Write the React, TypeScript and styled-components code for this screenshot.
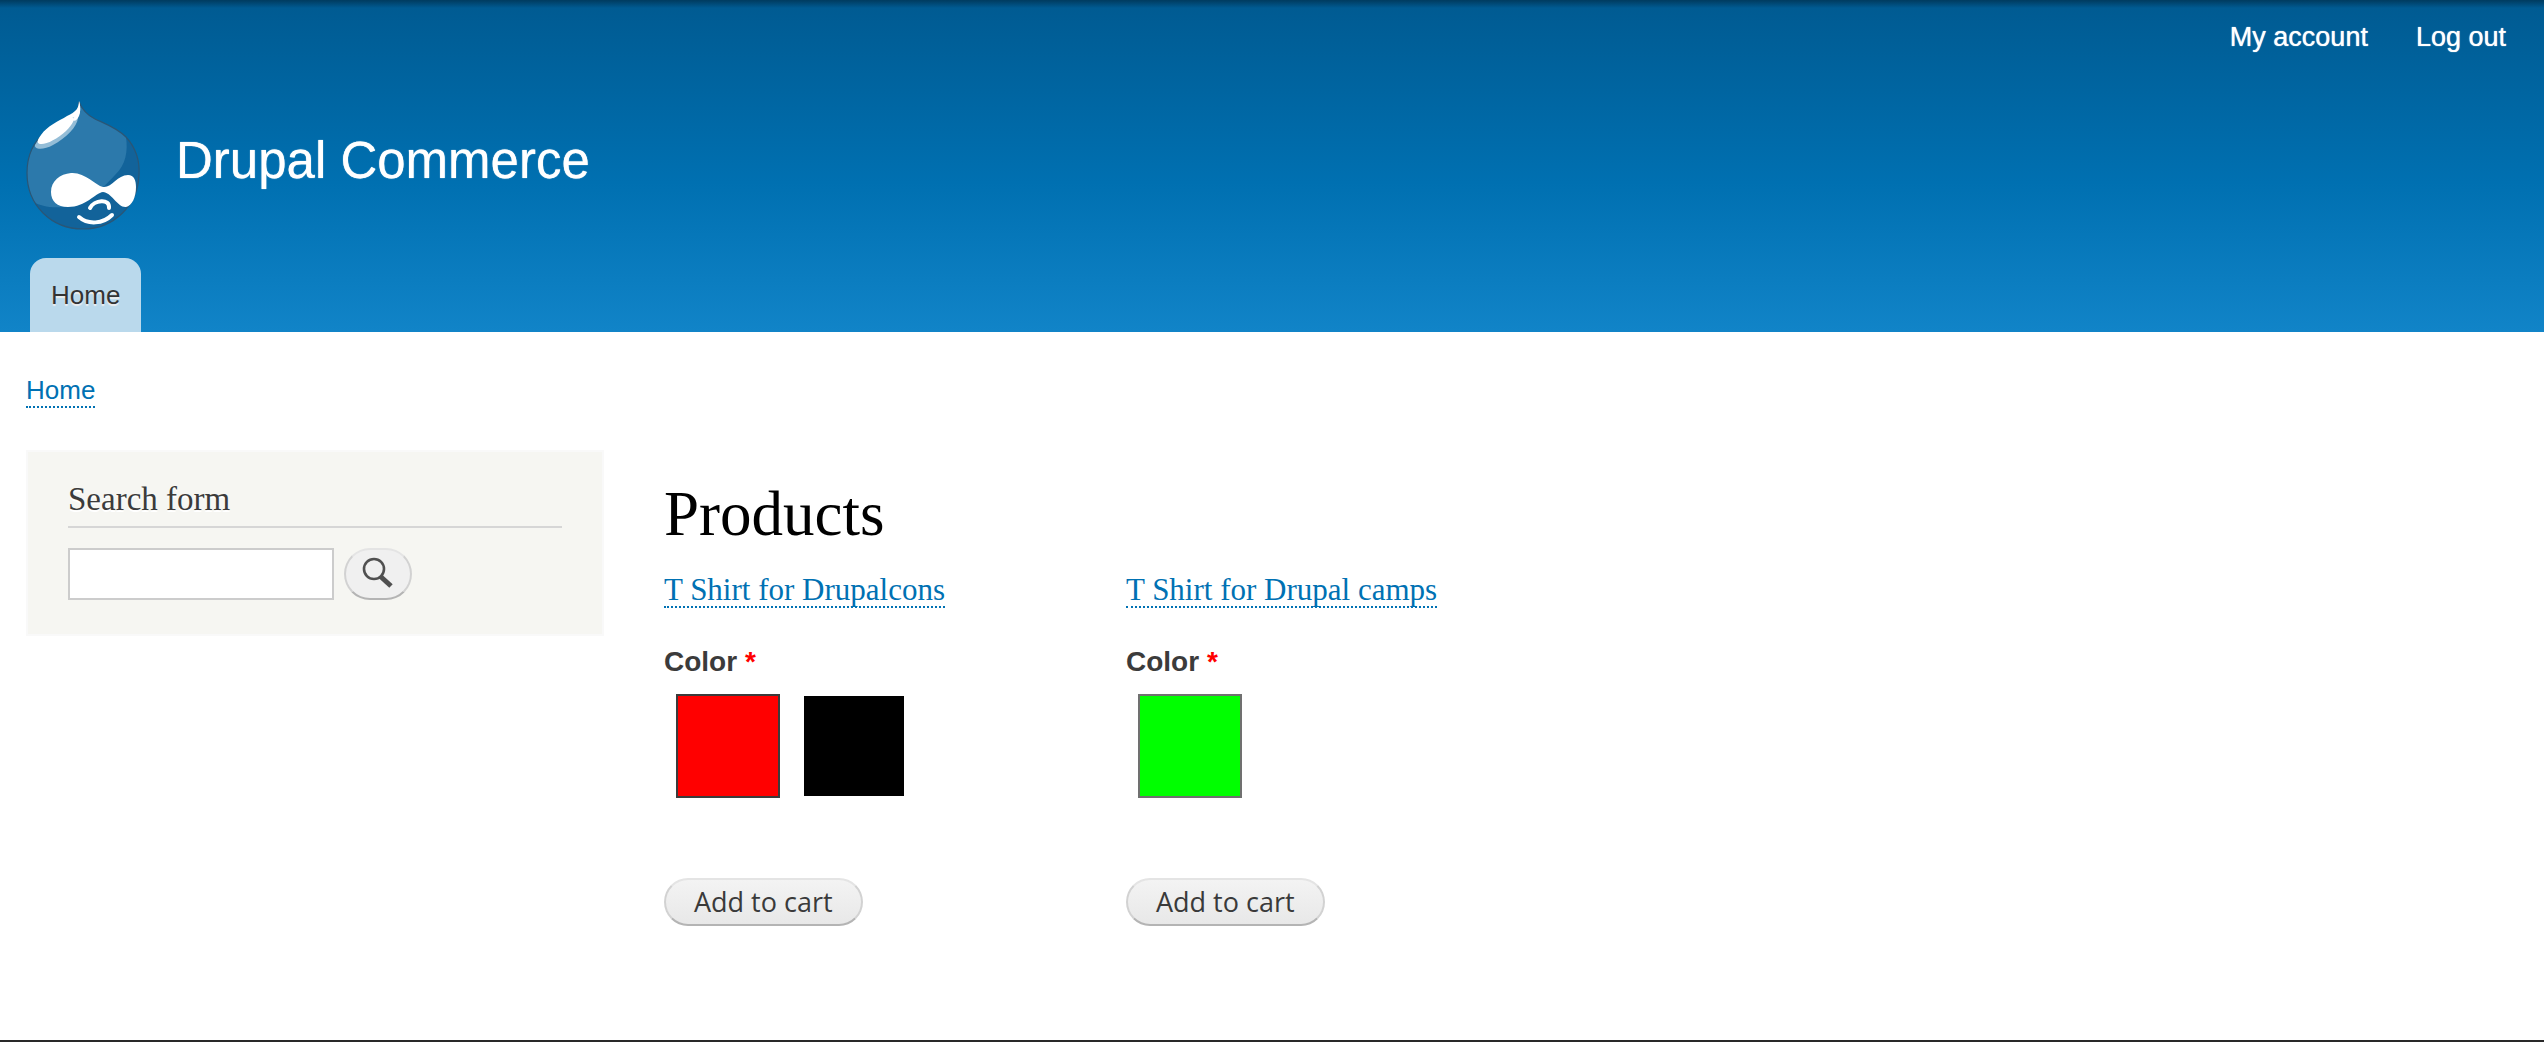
import React, { useState } from "react";
import styled, { createGlobalStyle } from "styled-components";

const sans = `"Liberation Sans", Arial, sans-serif`;
const serif = `Georgia, "Liberation Serif", serif`;
const humanist = `"Lucida Grande", "Open Sans", "Noto Sans", sans-serif`;

const GlobalStyle = createGlobalStyle`
  *, *::before, *::after { box-sizing: border-box; }
  body {
    margin: 0;
    background: #fff;
    color: #3b3b3b;
    font-family: ${serif};
  }
`;

const Page = styled.div`
  display: flex;
  flex-direction: column;
  min-height: 100vh;
`;

const Header = styled.header`
  display: flex;
  flex-direction: column;
  background:
    linear-gradient(to bottom, rgba(0, 0, 0, 0.35), rgba(0, 0, 0, 0)) top / 100% 8px no-repeat,
    linear-gradient(to bottom, #005a91 0%, #0070b1 55%, #1184c8 100%);
  font-family: ${sans};
`;

const AccountNav = styled.nav`
  display: flex;
  justify-content: flex-end;
  gap: 48px;
  padding: 20px 38px 0 26px;
`;

const AccountLink = styled.a`
  color: #fff;
  font-size: 27px;
  line-height: 34px;
  text-decoration: none;
  text-shadow: 0 0 1px #fff;
`;

const Branding = styled.div`
  display: flex;
  align-items: center;
  gap: 34px;
  padding: 46px 26px 0;
`;

const LogoLink = styled.a`
  display: block;
  svg { display: block; }
`;

const SiteName = styled.a`
  color: #fff;
  font-size: 51px;
  line-height: 60px;
  padding-bottom: 10px;
  text-decoration: none;
  text-shadow: 0 0 1px #fff;
`;

const MainMenu = styled.nav`
  display: flex;
  padding: 26px 30px 0;
`;

const Tab = styled.a`
  padding: 20px 21px;
  border-radius: 16px 16px 0 0;
  background: #bad9ec;
  color: #333;
  font-size: 26px;
  line-height: 34px;
  text-decoration: none;
  text-shadow: 0 2px 1px #eee;
`;

const Body = styled.div`
  flex: 1;
  padding: 42px 26px 48px;
`;

const DottedLink = styled.a`
  display: inline-block;
  color: #0071b3;
  border-bottom: 2px dotted #0071b3;
  text-decoration: none;
`;

const Breadcrumb = styled.nav`
  display: flex;
  margin-bottom: 42px;
  font-family: ${sans};
  font-size: 26px;
  line-height: 32px;
`;

const Columns = styled.div`
  display: grid;
  grid-template-columns: minmax(400px, 578px) minmax(0, 1fr);
  column-gap: 60px;
  align-items: start;
`;

const Sidebar = styled.aside`
  padding: 28px 40px 34px;
  background: #f6f6f2;
  border: 2px solid #f9f9f9;
`;

const BlockTitle = styled.h2`
  margin: 0 0 20px;
  padding-bottom: 8px;
  border-bottom: 2px solid #d6d6d6;
  font-size: 33px;
  font-weight: 400;
  line-height: 38px;
  text-shadow: 0 2px 0 #fff;
`;

const SearchForm = styled.form`
  display: flex;
  gap: 10px;
`;

const SearchInput = styled.input`
  width: 266px;
  height: 52px;
  padding: 4px 8px;
  border: 2px solid #ccc;
  border-radius: 0;
  background: #fff;
  color: #3b3b3b;
  font: 26px ${humanist};
`;

const pill = `
  border: 2px solid;
  border-color: #e4e4e4 #d2d2d2 #b4b4b4;
  cursor: pointer;
`;

const SearchButton = styled.button`
  ${pill}
  display: flex;
  align-items: center;
  justify-content: center;
  width: 68px;
  height: 52px;
  padding: 0;
  border-radius: 26px;
  background: #f0f0f0;
`;

const Content = styled.main`
  padding-top: 30px;
`;

const PageTitle = styled.h1`
  margin: 0 0 26px;
  color: #000;
  font-size: 63px;
  font-weight: 400;
  line-height: 68px;
`;

const ProductGrid = styled.div`
  display: grid;
  grid-template-columns: repeat(auto-fill, 402px);
  gap: 60px;
`;

const Product = styled.article`
  display: flex;
  flex-direction: column;
  align-items: flex-start;
`;

const ProductTitle = styled.h3`
  margin: 0;
  font-size: 31px;
  font-weight: 400;
  line-height: 32px;
  white-space: nowrap;
`;

const ColorField = styled.fieldset`
  margin: 34px 0 80px;
  padding: 0;
  border: 0;
`;

const FieldLabel = styled.legend`
  padding: 0;
  margin-bottom: 12px;
  font-family: ${sans};
  font-size: 28px;
  font-weight: 700;
  line-height: 40px;
`;

const Required = styled.span`
  color: #f00;
`;

const Swatches = styled.div`
  display: flex;
  gap: 22px;
  padding-left: 12px;
`;

const Swatch = styled.input<{ $fill: string; $edge: string }>`
  appearance: none;
  width: 104px;
  height: 104px;
  margin: 0;
  border: 2px solid #fff;
  background: ${(p) => p.$fill};
  background-clip: padding-box;
  cursor: pointer;
  &:checked { border-color: ${(p) => p.$edge}; }
`;

const CartButton = styled.button`
  ${pill}
  height: 48px;
  padding: 0 28px;
  border-radius: 24px;
  background: linear-gradient(#f3f3f3, #e8e8e8);
  color: #3a3a3a;
  font: 27px/40px ${humanist};
`;

const Footer = styled.footer`
  height: 2px;
  background: #292929;
`;

const Druplicon = () => (
  <svg width="116" height="132" viewBox="0 0 116 132" role="img" aria-label="Home">
    <path
      d="M53 2C56 9 61 15 69 19C80 24 91 28 100 37C110 48 114 60 113 75C112 105 88 129 57 129C25 129 1 105 1 73C1 55 8 41 20 32C29 25 40 21 47 16C51 13 53 8 53 2Z"
      fill="#12639a"
    />
    <path
      d="M53 2C56 9 61 15 69 19C80 24 91 28 100 37C102 51 100 65 89 75C76 89 60 105 37 107C24 108 14 106 8 102C3 93 1 83 1 73C1 55 8 41 20 32C29 25 40 21 47 16C51 13 53 8 53 2Z"
      fill="#2c79ab"
    />
    <path
      d="M53 2C56 9 61 15 69 19C80 24 91 28 100 37C110 48 114 60 113 75C112 105 88 129 57 129C25 129 1 105 1 73C1 55 8 41 20 32C29 25 40 21 47 16C51 13 53 8 53 2Z"
      fill="none"
      stroke="#2a5676"
      strokeWidth="1.2"
    />
    <path
      d="M9 45C8 50 18 50 27 45C40 38 51 27 52 18C52 15 50 15 47 17L14 37Z"
      fill="#94bdd7"
    />
    <path
      d="M53 1C54 5 55 12 53 16C51 20 49 22 46 20C51 15 53 9 53 1Z"
      fill="#fff"
    />
    <path
      d="M46 17C50 18 47 24 40 31C31 39 20 45 14 44C10 43 12 39 15 35C21 26 33 21 41 16C50 12 53 8 53 1C55 8 55 14 50 18Z"
      fill="#fff"
    />
    <path
      d="M45 73C59 72 69 85 77 87C86 88 91 75 102 75C108 75 110 80 110 87C110 97 106 106 100 107C92 108 85 92 77 92C69 93 60 107 42 107C31 107 25 101 25 92C25 81 34 74 45 73Z"
      fill="#fff"
    />
    <path
      d="M64 108C68 100 84 98 83 108M53 117C62 125 77 124 86 115"
      fill="none"
      stroke="#fff"
      strokeWidth="4"
      strokeLinecap="round"
    />
  </svg>
);

const SearchIcon = () => (
  <svg width="36" height="36" viewBox="0 0 36 36" aria-hidden="true">
    <circle cx="14" cy="13" r="10" fill="none" stroke="#505050" strokeWidth="2.6" />
    <path d="M20 20L31 30" stroke="#505050" strokeWidth="5" />
  </svg>
);

type Color = { name: string; fill: string; edge: string };
type Item = { id: string; title: string; colors: Color[] };

const products: Item[] = [
  {
    id: "drupalcons",
    title: "T Shirt for Drupalcons",
    colors: [
      { name: "Red", fill: "#ff0000", edge: "#3b3b3b" },
      { name: "Black", fill: "#000000", edge: "#3b3b3b" },
    ],
  },
  {
    id: "camps",
    title: "T Shirt for Drupal camps",
    colors: [{ name: "Green", fill: "#00ff00", edge: "#707070" }],
  },
];

function ProductCard({ item }: { item: Item }) {
  const [selected, setSelected] = useState(item.colors[0].name);
  return (
    <Product>
      <ProductTitle>
        <DottedLink href="#">{item.title}</DottedLink>
      </ProductTitle>
      <ColorField>
        <FieldLabel>
          Color <Required>*</Required>
        </FieldLabel>
        <Swatches>
          {item.colors.map((c) => (
            <Swatch
              key={c.name}
              type="radio"
              name={`color-${item.id}`}
              aria-label={c.name}
              $fill={c.fill}
              $edge={c.edge}
              checked={selected === c.name}
              onChange={() => setSelected(c.name)}
            />
          ))}
        </Swatches>
      </ColorField>
      <CartButton type="button">Add to cart</CartButton>
    </Product>
  );
}

export default function App() {
  return (
    <Page>
      <GlobalStyle />
      <Header>
        <AccountNav>
          <AccountLink href="#">My account</AccountLink>
          <AccountLink href="#">Log out</AccountLink>
        </AccountNav>
        <Branding>
          <LogoLink href="#">
            <Druplicon />
          </LogoLink>
          <SiteName href="#">Drupal Commerce</SiteName>
        </Branding>
        <MainMenu>
          <Tab href="#">Home</Tab>
        </MainMenu>
      </Header>
      <Body>
        <Breadcrumb>
          <DottedLink href="#">Home</DottedLink>
        </Breadcrumb>
        <Columns>
          <Sidebar>
            <BlockTitle>Search form</BlockTitle>
            <SearchForm onSubmit={(e) => e.preventDefault()}>
              <SearchInput type="search" aria-label="Search" />
              <SearchButton type="submit" aria-label="Search">
                <SearchIcon />
              </SearchButton>
            </SearchForm>
          </Sidebar>
          <Content>
            <PageTitle>Products</PageTitle>
            <ProductGrid>
              {products.map((item) => (
                <ProductCard key={item.id} item={item} />
              ))}
            </ProductGrid>
          </Content>
        </Columns>
      </Body>
      <Footer />
    </Page>
  );
}
